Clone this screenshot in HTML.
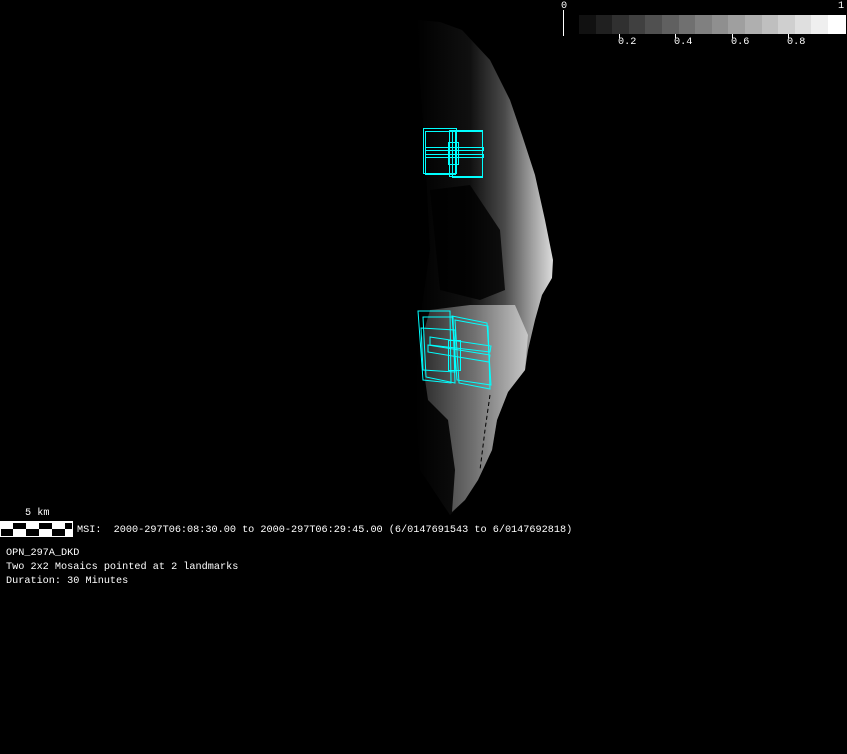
<!DOCTYPE html>
<html><head><style>
html,body{margin:0;padding:0;background:#000;width:847px;height:754px;overflow:hidden}
.t{position:absolute;color:#fff;font-family:"Liberation Mono",monospace;font-size:10.2px;line-height:12px;white-space:pre}
</style></head><body>
<svg width="847" height="754" style="position:absolute;left:0;top:0">
<defs>
<linearGradient id="g" x1="0" y1="0" x2="1" y2="0">
<stop offset="0" stop-color="#000"/>
<stop offset="0.4" stop-color="#101010"/>
<stop offset="0.65" stop-color="#4a4a4a"/>
<stop offset="0.85" stop-color="#a0a0a0"/>
<stop offset="1" stop-color="#dcdcdc"/>
</linearGradient>
<linearGradient id="g2" x1="0" y1="0" x2="1" y2="0">
<stop offset="0" stop-color="#2a2a2a"/>
<stop offset="0.5" stop-color="#707070"/>
<stop offset="1" stop-color="#c8c8c8"/>
</linearGradient>
</defs>
<path d="M418,20 L440,22 L462,30 L490,60 L510,100 L522,135 L535,175 L545,220 L553,260 L552,278 L542,295 L535,320 L528,350 L525,370 L508,392 L497,420 L492,450 L478,480 L465,500 L450,515 L440,500 L420,470 L415,400 L420,320 L430,250 L425,150 L420,80 Z" fill="url(#g)"/>
<path d="M430,310 L470,305 L515,305 L528,335 L525,370 L508,392 L497,420 L492,450 L478,480 L465,500 L452,512 L455,470 L448,420 L428,400 L420,345 Z" fill="url(#g2)"/>
<path d="M430,190 L470,185 L500,230 L505,290 L480,300 L440,290 Z" fill="#000" opacity="0.8"/>
<g fill="none" stroke="#00ffff" stroke-width="1">
<rect x="423.5" y="128.5" width="33" height="45"/>
<rect x="425.5" y="131.5" width="30" height="43"/>
<rect x="449.5" y="130.5" width="33" height="46"/>
<rect x="452.5" y="131.5" width="30" height="46"/>
<rect x="425.5" y="147.5" width="58" height="3"/>
<rect x="425.5" y="154.5" width="58" height="3"/>
<rect x="448.5" y="142.5" width="10" height="22"/>
<path d="M418,311 L450,311 L451,383 L423,380 Z"/>
<path d="M423,317 L453,317 L455,383 L426,377 Z"/>
<path d="M452,316 L487,323 L491,385 L457,380 Z"/>
<path d="M455,320 L488,326 L490,389 L459,383 Z"/>
<path d="M430,337 L491,346 L490,352 L430,345 Z"/>
<path d="M428,345 L490,355 L489,362 L428,352 Z"/>
<rect x="448.5" y="340.5" width="12" height="30"/>
<path d="M421,328 L455,330 L455,372 L423,370 Z"/>
</g>
<path d="M490,395 L485,430 L480,470" stroke="#000" stroke-width="1" fill="none" stroke-dasharray="4 3"/>
<line x1="563.5" y1="10" x2="563.5" y2="36" stroke="#fff"/>
<g>
<rect x="579" y="15" width="17" height="19" fill="#111"/>
<rect x="596" y="15" width="16" height="19" fill="#202020"/>
<rect x="612" y="15" width="17" height="19" fill="#303030"/>
<rect x="629" y="15" width="16" height="19" fill="#404040"/>
<rect x="645" y="15" width="17" height="19" fill="#505050"/>
<rect x="662" y="15" width="17" height="19" fill="#606060"/>
<rect x="679" y="15" width="16" height="19" fill="#707070"/>
<rect x="695" y="15" width="17" height="19" fill="#808080"/>
<rect x="712" y="15" width="16" height="19" fill="#8f8f8f"/>
<rect x="728" y="15" width="17" height="19" fill="#9f9f9f"/>
<rect x="745" y="15" width="17" height="19" fill="#afafaf"/>
<rect x="762" y="15" width="16" height="19" fill="#bfbfbf"/>
<rect x="778" y="15" width="17" height="19" fill="#cfcfcf"/>
<rect x="795" y="15" width="16" height="19" fill="#dfdfdf"/>
<rect x="811" y="15" width="17" height="19" fill="#efefef"/>
<rect x="828" y="15" width="18" height="19" fill="#fff"/>
</g>
<g stroke="#fff"><line x1="619.5" y1="34" x2="619.5" y2="38"/><line x1="675.5" y1="34" x2="675.5" y2="38"/><line x1="732.5" y1="34" x2="732.5" y2="38"/><line x1="788.5" y1="34" x2="788.5" y2="38"/></g>
<rect x="0.5" y="521.5" width="72" height="15" fill="#fff" stroke="#fff"/>
<g fill="#000">
<rect x="13" y="523" width="13" height="6"/><rect x="39" y="523" width="13" height="6"/><rect x="65" y="523" width="7" height="6"/>
<rect x="1" y="529" width="12" height="7"/><rect x="26" y="529" width="13" height="7"/><rect x="52" y="529" width="13" height="7"/>
</g>
</svg>
<div class="t" style="left:561px;top:1px">0</div>
<div class="t" style="left:838px;top:1px">1</div>
<div class="t" style="left:618px;top:37px">0.2</div>
<div class="t" style="left:674px;top:37px">0.4</div>
<div class="t" style="left:731px;top:37px">0.6</div>
<div class="t" style="left:787px;top:37px">0.8</div>
<div class="t" style="left:25px;top:508px">5 km</div>
<div class="t" style="left:77px;top:525px">MSI:  2000-297T06:08:30.00 to 2000-297T06:29:45.00 (6/0147691543 to 6/0147692818)</div>
<div class="t" style="left:6px;top:548px">OPN_297A_DKD</div>
<div class="t" style="left:6px;top:562px">Two 2x2 Mosaics pointed at 2 landmarks</div>
<div class="t" style="left:6px;top:576px">Duration: 30 Minutes</div>
</body></html>
